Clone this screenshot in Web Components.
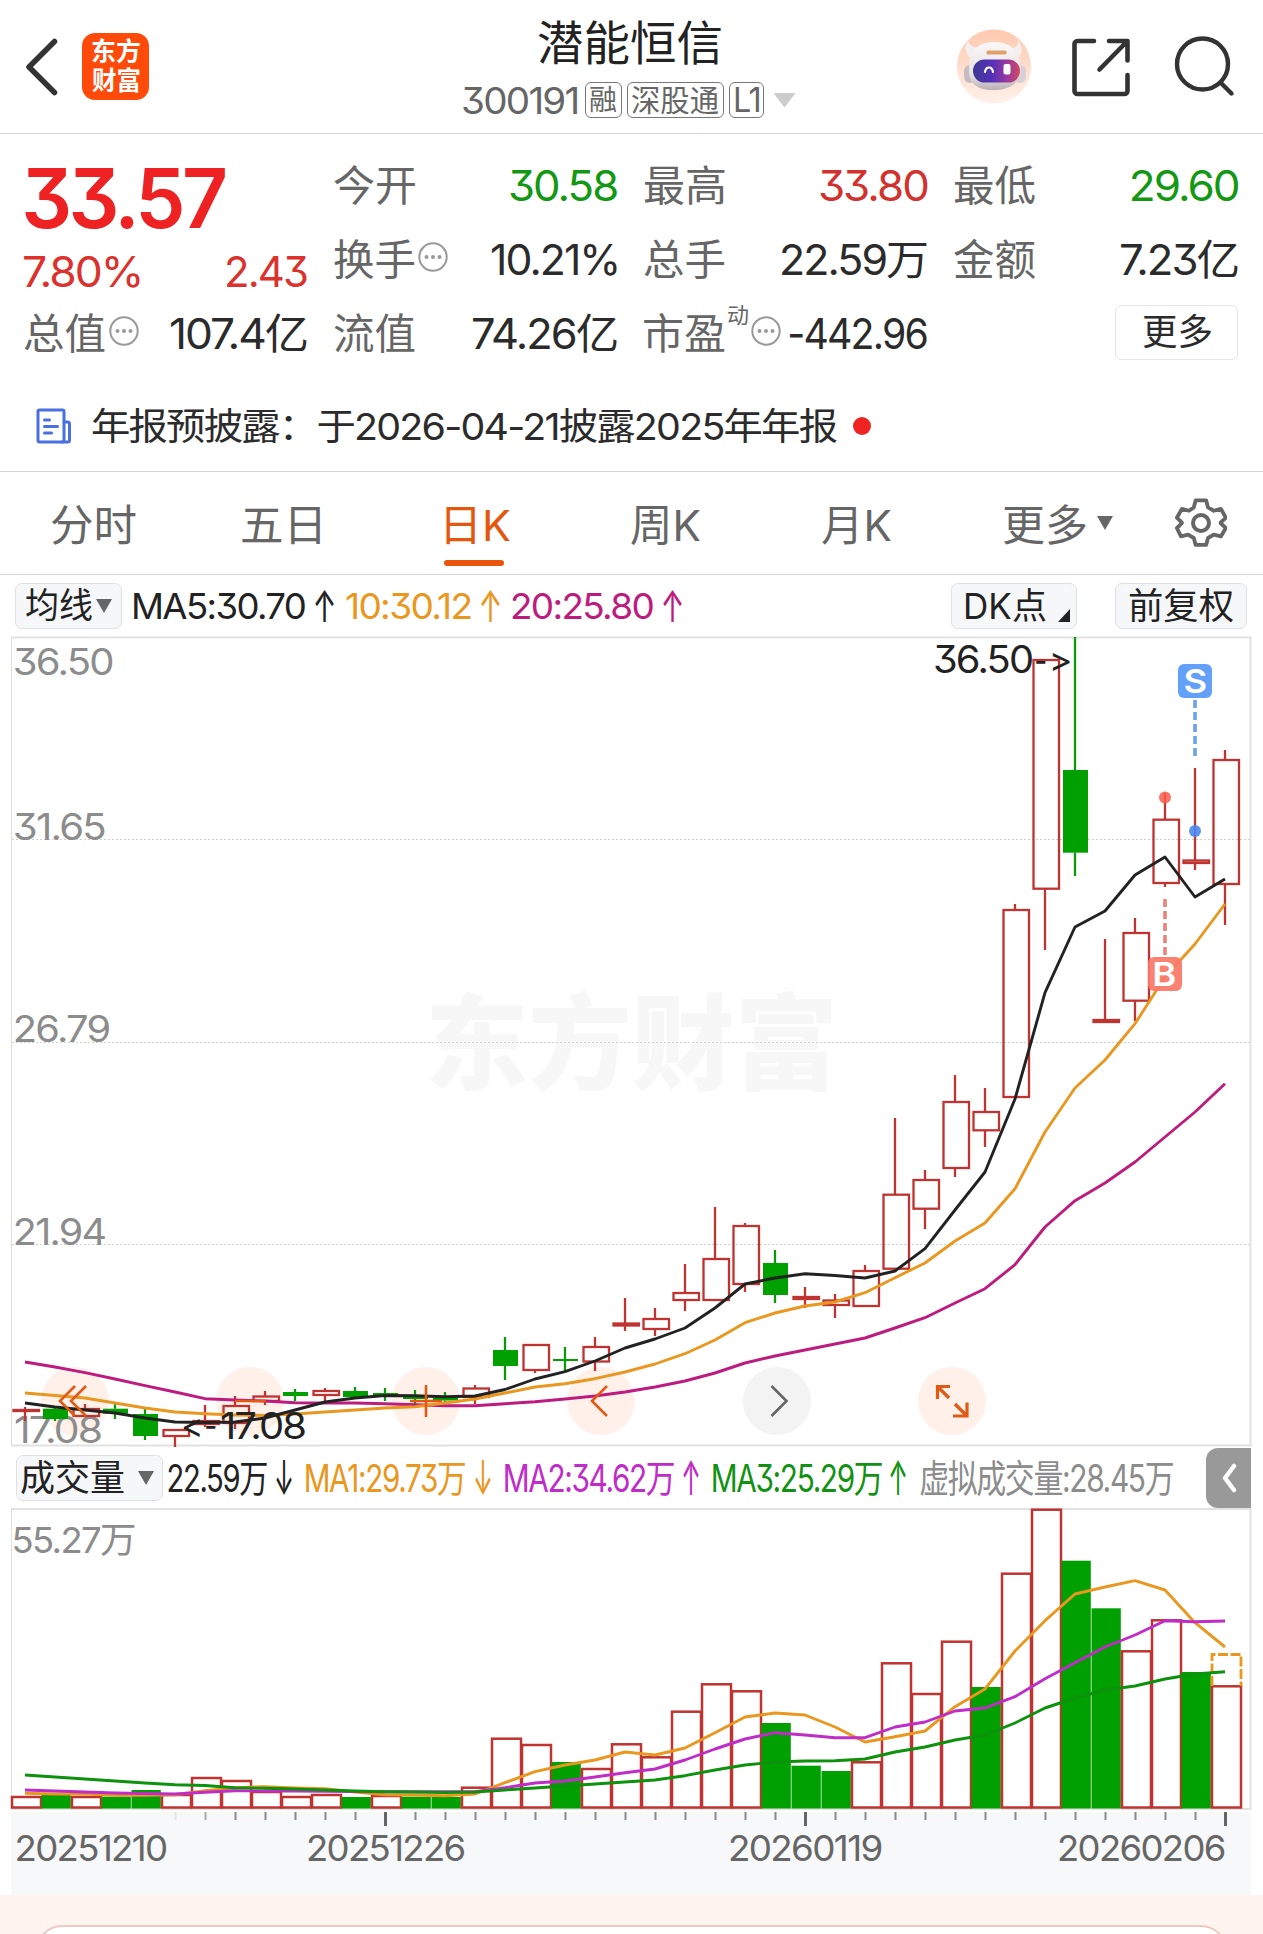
<!DOCTYPE html>
<html lang="zh-CN">
<head>
<meta charset="utf-8">
<title>潜能恒信 300191</title>
<style>
  body {
    margin: 0;
    width: 1263px;
    height: 1934px;
    overflow: hidden;
    background: #fff;
    color: #2b2b2b;
    font-family: Inter, "Noto Sans CJK SC", sans-serif;
    font-feature-settings: "cv09", "calt" 0;
  }
</style>
</head>
<body>
<stock-page></stock-page>

<script>
const FONT = 'Inter, "Noto Sans CJK SC", sans-serif'
const RED = '#bf3431'
const GREEN = '#00a000'
const ctx = document.createElement('canvas').getContext('2d')

// Numbers are set tighter than plain Chinese labels
const tracking = (text, size) => (/\d/.test(text) ? -0.045 * size : 0)

// Ink box of a string, used to condense labels into a fixed width
function measure(text, size, weight) {
  ctx.font = `${weight} ${size}px ${FONT}`
  ctx.letterSpacing = `${tracking(text, size)}px`
  const m = ctx.measureText(text)
  return { left: m.actualBoundingBoxLeft, width: m.actualBoundingBoxLeft + m.actualBoundingBoxRight }
}

function svgText(text, x, y, w, size, fill, weight = 400) {
  const m = measure(text, size, weight)
  const s = w / m.width
  const safe = text.replace('<', '&lt;').replace('>', '&gt;')
  return `<text transform="translate(${x + m.left * s} ${y}) scale(${s} 1)" font-size="${size}" font-weight="${weight}" letter-spacing="${tracking(text, size)}" fill="${fill}">${safe}</text>`
}

/** <fit-text w="107" size="42" weight="400">30.58</fit-text> */
class FitText extends HTMLElement {
  connectedCallback() {
    const text = this.textContent
    const w = +this.getAttribute('w')
    const size = +this.getAttribute('size') || 42
    const weight = this.getAttribute('weight') || 400
    const m = measure(text, size, weight)
    const s = w / m.width
    this.attachShadow({ mode: 'open' }).innerHTML = /* html */ `
      <style>
        :host { display: block; flex: none; width: ${w}px; height: ${size}px; white-space: nowrap; }
        span {
          display: inline-block;
          font-size: ${size}px;
          font-weight: ${weight};
          line-height: ${size}px;
          letter-spacing: ${tracking(text, size)}px;
          transform-origin: 0 0;
          transform: translateX(${m.left * s}px) scaleX(${s});
        }
      </style>
      <span><slot></slot></span>
    `
  }
}
customElements.define('fit-text', FitText)

const ICONS = {
  back: [34, 60, '<path d="M29.500 4.500 4 30 29.500 55.500" fill="none" stroke="#333" stroke-width="5.500" stroke-linecap="round" stroke-linejoin="round"/>'],
  share: [62, 62, '<g fill="none" stroke="#333" stroke-width="4.600" stroke-linecap="round" stroke-linejoin="round"><path d="M24 5H7.500a3 3 0 0 0-3 3v47a3 3 0 0 0 3 3h47a3 3 0 0 0 3-3V39M39 5h18.500v19.500M57 5.500 29.500 33.500"/></g>'],
  search: [64, 64, '<g fill="none" stroke="#333" stroke-width="4.400" stroke-linecap="round"><circle cx="30.500" cy="31" r="25.500"/><path d="m48.500 49.500 11 11"/></g>'],
  dots: [30, 30, '<circle cx="15" cy="15" r="13.700" fill="none" stroke="#999" stroke-width="2"/><g fill="#999"><circle cx="8.500" cy="15" r="2"/><circle cx="15" cy="15" r="2"/><circle cx="21.500" cy="15" r="2"/></g>'],
  report: [36, 38, '<g fill="none" stroke="#4a70e0" stroke-width="3" stroke-linejoin="round" stroke-linecap="round"><rect x="2" y="3" width="26" height="32" rx="1.500"/><path d="M28 15h3.500a2 2 0 0 1 2 2v16a2 2 0 0 1-2 2H26M8.500 13h5M8.500 19.500h13M8.500 26h7"/></g>'],
  gear: [52, 54, '<g fill="none" stroke="#666" stroke-width="4" stroke-linejoin="round"><path d="M20.500 4h11l2 7.500 6 3.500 7.500-2 5.300 9.300-5.600 5.200v.5l5.600 5.200-5.300 8.800-7.500-1.800-6 3.500-2 7.300h-11l-2-7.300-6-3.500-7.500 1.800L.7 33.200 6 28v-.5L.7 22.300 6 13l7.500 2 5-3.500z" transform="translate(1.200 .5) scale(.95)"/><circle cx="26" cy="27" r="8"/></g>'],
  down: [16, 14, '<path d="M0 0h16L8 14z" fill="#666"/>'],
  caret: [23, 15, '<path d="M1 0h21L11.500 14z" fill="#ccc" stroke="#ccc" stroke-linejoin="round"/>'],
  corner: [12, 13, '<path d="M12 0v13H0z" fill="#222"/>'],
  fold: [16, 32, '<path d="M13 4 4 16l9 12" fill="none" stroke="#fff" stroke-width="4.500" stroke-linecap="round" stroke-linejoin="round"/>'],
  robot: [76, 76, `
    <defs>
      <linearGradient id="bg" x2="0" y2="1"><stop stop-color="#ffc9ae"/><stop offset="1" stop-color="#fff1ea"/></linearGradient>
      <linearGradient id="hd" x2="0" y2="1"><stop stop-color="#fbf8f8"/><stop offset=".7" stop-color="#e6e1e3"/><stop offset="1" stop-color="#b8b0b4"/></linearGradient>
      <linearGradient id="fc"><stop stop-color="#3f3a92"/><stop offset=".4" stop-color="#5330b8"/><stop offset=".75" stop-color="#a03a9c"/><stop offset="1" stop-color="#d24a5e"/></linearGradient>
    </defs>
    <circle cx="37" cy="37.500" r="37" fill="url(#bg)"/>
    <path d="M13 29c-5-6-6-12-2-17 2 5 6 7 12 7zM58 26c-2-3-3-5-2-7 4-1 5-4 5-8 4 5 5 11 1 17z" fill="#f4efef"/>
    <rect x="7" y="36" width="12" height="18" rx="6" fill="#c4bcc0"/>
    <rect x="57" y="36" width="12" height="18" rx="6" fill="#d8d0d4"/>
    <path d="M37 13c17 0 26 9 27 27 0 14-11 21-28 21S12 54 12 41c0-19 8-28 25-28z" fill="url(#hd)"/>
    <rect x="29.500" y="21.500" width="20" height="4" rx="1.500" fill="#dfa06c"/>
    <rect x="16" y="30.500" width="47" height="23" rx="11.500" fill="url(#fc)"/>
    <path d="M28 43c1-6 7-6 8 0" fill="none" stroke="#fff" stroke-width="2.200" stroke-linecap="round"/>
    <rect x="46.500" y="35" width="7" height="10.500" rx="2" fill="#fff"/>`],
}

/** <ui-icon name="search"></ui-icon> */
class UiIcon extends HTMLElement {
  connectedCallback() {
    const [w, h, body] = ICONS[this.getAttribute('name')]
    this.attachShadow({ mode: 'open' }).innerHTML = /* html */ `
      <style>:host { display: block; flex: none; width: ${w}px; height: ${h}px; } svg { display: block; }</style>
      <svg width="${w}" height="${h}" viewBox="0 0 ${w} ${h}">${body}</svg>
    `
  }
}
customElements.define('ui-icon', UiIcon)

/** Small outlined button */
class ChipButton extends HTMLElement {
  connectedCallback() {
    this.attachShadow({ mode: 'open' }).innerHTML = /* html */ `
      <style>
        :host {
          display: flex;
          align-items: center;
          flex: none;
          box-sizing: border-box;
          height: 46px;
          background: #f6f7f9;
          border: 1px solid #dfe1e5;
          border-radius: 7px;
        }
      </style>
      <slot></slot>
    `
  }
}
customElements.define('chip-button', ChipButton)

class StockHeader extends HTMLElement {
  connectedCallback() {
    this.attachShadow({ mode: 'open' }).innerHTML = /* html */ `
      <style>
        :host { display: flex; height: 133px; border-bottom: 1px solid #d6d6d6; }
        .left, .right { display: flex; align-items: center; flex: none; }
        .left { padding-left: 25px; width: 425px; box-sizing: border-box; }
        .logo {
          display: flex; flex-direction: column; align-items: center; justify-content: center; gap: 3px;
          width: 67px; height: 67px; margin-left: 23px; border-radius: 13px;
          background: #ff4a0a; color: #fff;
        }
        .mid { flex: 1; display: flex; flex-direction: column; color: #222; }
        .title { margin: 19px 0 0 113px; }
        .sub { display: flex; align-items: center; margin: 9px 0 0 38px; height: 50px; color: #666; }
        .tag {
          display: flex; align-items: center; justify-content: center; flex: none;
          box-sizing: border-box; height: 36px; border: 1.500px solid #777; border-radius: 6px;
        }
        .right { width: 306px; }
      </style>
      <div class="left">
        <ui-icon name="back"></ui-icon>
        <div class="logo">
          <fit-text w="48" size="26" weight="700">东方</fit-text>
          <fit-text w="48" size="26" weight="700">财富</fit-text>
        </div>
      </div>
      <div class="mid">
        <fit-text class="title" w="183" size="47">潜能恒信</fit-text>
        <div class="sub">
          <fit-text w="114" size="37">300191</fit-text>
          <div class="tag" style="width:37px;margin-left:8px"><fit-text w="27" size="28">融</fit-text></div>
          <div class="tag" style="width:97px;margin-left:5px"><fit-text w="87" size="30">深股通</fit-text></div>
          <div class="tag" style="width:35px;margin-left:5px"><fit-text w="24" size="34">L1</fit-text></div>
          <ui-icon name="caret" style="margin-left:9px"></ui-icon>
        </div>
      </div>
      <div class="right">
        <ui-icon name="robot"></ui-icon>
        <ui-icon name="share" style="margin-left:37px"></ui-icon>
        <ui-icon name="search" style="margin-left:40px;margin-top:-3px"></ui-icon>
      </div>
    `
  }
}
customElements.define('stock-header', StockHeader)

/** Label on the left, value on the right */
class QuoteItem extends HTMLElement {
  connectedCallback() {
    this.attachShadow({ mode: 'open' }).innerHTML = /* html */ `
      <style>
        :host { display: flex; justify-content: space-between; align-items: center; }
        .label { display: flex; align-items: center; color: #666; }
      </style>
      <div class="label"><slot name="label"></slot></div>
      <slot></slot>
    `
  }
}
customElements.define('quote-item', QuoteItem)

class QuotePanel extends HTMLElement {
  connectedCallback() {
    this.attachShadow({ mode: 'open' }).innerHTML = /* html */ `
      <style>
        :host {
          display: grid;
          grid-template-columns: 283px 283px 283px 284px;
          grid-template-rows: 74px 74px 74px;
          column-gap: 27px;
          padding: 15px 0 0 24px;
        }
        .price { grid-row: 1 / 3; display: flex; flex-direction: column; color: #ee2222; margin-top: -1px; }
        .price > div { display: flex; align-items: center; justify-content: space-between; }
        .now { height: 101px; padding-left: 1px; }
        .change { height: 46px; color: #dc322e; }
        .up { color: #d2322e; }
        .down { color: #129812; }
        .more {
          display: flex; align-items: center; justify-content: center; justify-self: end; align-self: center;
          box-sizing: border-box; width: 123px; height: 55px; border: 1.500px solid #e3e5e8; border-radius: 6px;
          margin-top: -4px;
        }
      </style>
      <div class="price">
        <div class="now"><fit-text w="200" size="83" weight="600">33.57</fit-text></div>
        <div class="change"><fit-text w="116">7.80%</fit-text><fit-text w="80">2.43</fit-text></div>
      </div>
      <quote-item><fit-text slot="label" w="81">今开</fit-text><fit-text class="down" w="107">30.58</fit-text></quote-item>
      <quote-item><fit-text slot="label" w="81">最高</fit-text><fit-text class="up" w="107">33.80</fit-text></quote-item>
      <quote-item><fit-text slot="label" w="81">最低</fit-text><fit-text class="down" w="106">29.60</fit-text></quote-item>
      <quote-item>
        <fit-text slot="label" w="81">换手</fit-text>
        <ui-icon slot="label" name="dots" style="margin:-6px 0 0 3px"></ui-icon>
        <fit-text w="126">10.21%</fit-text>
      </quote-item>
      <quote-item><fit-text slot="label" w="81">总手</fit-text><fit-text w="145">22.59万</fit-text></quote-item>
      <quote-item><fit-text slot="label" w="81">金额</fit-text><fit-text w="117">7.23亿</fit-text></quote-item>
      <quote-item>
        <fit-text slot="label" w="81">总值</fit-text>
        <ui-icon slot="label" name="dots" style="margin:-6px 0 0 4px"></ui-icon>
        <fit-text w="137">107.4亿</fit-text>
      </quote-item>
      <quote-item><fit-text slot="label" w="81">流值</fit-text><fit-text w="144">74.26亿</fit-text></quote-item>
      <quote-item>
        <fit-text slot="label" w="81">市盈</fit-text>
        <fit-text slot="label" w="20" size="22" style="margin:-38px 0 0 3px">动</fit-text>
        <ui-icon slot="label" name="dots" style="margin:-6px 0 0 3px"></ui-icon>
        <fit-text w="138">-442.96</fit-text>
      </quote-item>
      <div class="more"><fit-text w="68" size="36">更多</fit-text></div>
    `
  }
}
customElements.define('quote-panel', QuotePanel)

class NoticeBar extends HTMLElement {
  connectedCallback() {
    this.attachShadow({ mode: 'open' }).innerHTML = /* html */ `
      <style>
        :host {
          display: flex; align-items: center; box-sizing: border-box;
          height: 101px; padding: 10px 0 0 36px; border-bottom: 1px solid #d6d6d6;
        }
        fit-text { margin-left: 20px; }
        i { width: 18px; height: 18px; margin-left: 16px; border-radius: 50%; background: #f02222; }
      </style>
      <ui-icon name="report"></ui-icon>
      <fit-text w="745" size="37">年报预披露：于2026-04-21披露2025年年报</fit-text>
      <i></i>
    `
  }
}
customElements.define('notice-bar', NoticeBar)

class PeriodTabs extends HTMLElement {
  connectedCallback() {
    // [label, ink width, gap before]
    const tabs = [['分时', 85, 51], ['五日', 78, 106], ['日K', 64, 126], ['周K', 69, 121], ['月K', 69, 122], ['更多', 82, 113]]
    this.attachShadow({ mode: 'open' }).innerHTML = /* html */ `
      <style>
        :host {
          display: flex; align-items: center; box-sizing: border-box;
          height: 103px; border-bottom: 1px solid #d6d6d6; color: #666;
        }
        .tab { display: flex; flex-direction: column; justify-content: center; height: 102px; padding-top: 5px; box-sizing: border-box; }
        .on { color: #e4580e; padding-top: 24px; }
        .on i { width: 60px; height: 6px; margin: 13px 0 0 -2px; border-radius: 3px; background: #e8560c; }
      </style>
      ${tabs.map(([t, w, gap]) => `
        <div class="tab${t === '日K' ? ' on' : ''}" style="margin-left:${gap}px">
          <fit-text w="${w}" size="43">${t}</fit-text>${t === '日K' ? '<i></i>' : ''}
        </div>`).join('')}
      <ui-icon name="down" style="margin:0 0 0 11px"></ui-icon>
      <ui-icon name="gear" style="margin-left:62px"></ui-icon>
    `
  }
}
customElements.define('period-tabs', PeriodTabs)

class MaBar extends HTMLElement {
  connectedCallback() {
    this.attachShadow({ mode: 'open' }).innerHTML = /* html */ `
      <style>
        :host { display: flex; align-items: center; height: 61px; padding-left: 15px; color: #222; }
        .o { color: #e9971f; }
        .m { color: #bd1c7e; }
      </style>
      <chip-button style="width:107px;padding-left:10px">
        <fit-text w="66" size="35">均线</fit-text>
        <ui-icon name="down" style="margin-left:4px"></ui-icon>
      </chip-button>
      <fit-text style="margin-left:12px" w="171" size="36">MA5:30.70</fit-text>
      <fit-text style="margin-left:10px" w="19" size="44">↑</fit-text>
      <fit-text class="o" style="margin-left:12px" w="125" size="36">10:30.12</fit-text>
      <fit-text class="o" style="margin-left:10px" w="19" size="44">↑</fit-text>
      <fit-text class="m" style="margin-left:12px" w="141" size="36">20:25.80</fit-text>
      <fit-text class="m" style="margin-left:10px" w="19" size="44">↑</fit-text>
      <chip-button style="width:126px;margin-left:269px;padding-left:14px">
        <fit-text w="80" size="36">DK点</fit-text>
        <ui-icon name="corner" style="margin:20px 0 0 12px"></ui-icon>
      </chip-button>
      <chip-button style="width:132px;margin-left:38px;padding-left:13px">
        <fit-text w="104" size="36">前复权</fit-text>
      </chip-button>
    `
  }
}
customElements.define('ma-bar', MaBar)

const STEP = 30
const cx = (i) => 25 + i * STEP
const line = (ys, color) =>
  `<polyline points="${ys.map((y, i) => `${cx(i)},${y}`).join(' ')}" fill="none" stroke="${color}" stroke-width="2.900" stroke-linejoin="round"/>`

// [up, high, body top, body bottom, low] in chart pixels
const CANDLES = [
  [1, 1407, 1410, 1411, 1421], [0, 1406, 1408.7, 1419, 1421], [1, 1404, 1409, 1416, 1417], [0, 1404, 1408.7, 1413.7, 1419],
  [0, 1409, 1414, 1436, 1440], [1, 1430, 1430, 1436, 1447], [1, 1405, 1421, 1424, 1427], [1, 1396, 1406, 1423, 1429],
  [1, 1391, 1396.5, 1401, 1405], [0, 1389, 1392, 1396, 1401], [1, 1388, 1391, 1395, 1401], [0, 1387, 1391, 1397, 1397],
  [0, 1388, 1393, 1395, 1401], [0, 1390, 1396, 1399, 1404], [0, 1392, 1398, 1400.5, 1402], [1, 1385, 1388.5, 1397, 1404],
  [0, 1337, 1350, 1366, 1380], [1, 1345, 1345, 1370, 1373], [0, 1347, 1359, 1361, 1372], [1, 1337, 1347, 1361.5, 1371],
  [1, 1298, 1323.5, 1325.5, 1331], [1, 1308, 1319, 1329, 1336], [1, 1264, 1293, 1300, 1311], [1, 1207, 1259, 1300, 1300],
  [1, 1223, 1226, 1284, 1292], [0, 1250, 1263, 1295, 1303], [1, 1287, 1297, 1299, 1308], [1, 1294, 1300.5, 1305, 1318],
  [1, 1265, 1271, 1306, 1307], [1, 1118, 1194.7, 1268.7, 1269], [1, 1170, 1180, 1208.7, 1229], [1, 1075, 1102, 1168, 1177],
  [1, 1088, 1112, 1130.3, 1147], [1, 904, 910, 1097, 1097], [1, 660, 660, 888.7, 950], [0, 637, 770, 852.7, 876],
  [1, 939, 1020, 1022, 1023], [1, 918, 933, 1000.7, 1021], [1, 793, 819.7, 883, 887], [1, 768, 860.5, 863, 870],
  [1, 750, 760, 884, 925],
]
const MA5 = [1403, 1407, 1410, 1413, 1418, 1422, 1422.5, 1422, 1418, 1410, 1402, 1398, 1395.5, 1395.7, 1396.7, 1396, 1389.5, 1379, 1371.7, 1361, 1348, 1339, 1328, 1308, 1284, 1278, 1273.7, 1275.5, 1278, 1271, 1248.7, 1210, 1172, 1099, 992.7, 927, 911, 875, 857, 897, 879]
const MA10 = [1393, 1395.5, 1398, 1403, 1408, 1412, 1413.7, 1415, 1415.5, 1414, 1412, 1410, 1408, 1406.7, 1403, 1399, 1393, 1387, 1383.7, 1378.7, 1372, 1364, 1353.7, 1340, 1322.7, 1313, 1306, 1302, 1292.7, 1277.7, 1263, 1241, 1223, 1188.7, 1132, 1088, 1060, 1023.7, 977, 944, 904]
const MA20 = [1362, 1367, 1372.7, 1379, 1385.7, 1392, 1398.7, 1400, 1401, 1402.7, 1403, 1403, 1403.7, 1404.7, 1405.7, 1405.7, 1403.7, 1401.7, 1399, 1396, 1392, 1387, 1381, 1373, 1363, 1356, 1350, 1344, 1338, 1328, 1317.7, 1303, 1288.7, 1264.7, 1227, 1200.7, 1183, 1162, 1137, 1112, 1083.7]

function candle([up, high, top, bottom, low], i) {
  const x = cx(i)
  const color = up ? RED : '#0b980b'
  const wicks = `<path d="M${x} ${high}V${top}M${x} ${bottom}V${low}" stroke="${color}" stroke-width="2.300"/>`
  const body = up
    ? `<rect x="${x - 11.5}" y="${top}" width="25.500" height="${bottom - top}" fill="none" stroke="${RED}" stroke-width="2.300"/>`
    : `<rect x="${x - 12}" y="${top}" width="25" height="${bottom - top}" fill="${GREEN}"/>`
  return wicks + body
}

class KlineChart extends HTMLElement {
  connectedCallback() {
    const labels = [['36.50', 675, 98], ['31.65', 839.5, 90], ['26.79', 1042, 94], ['21.94', 1245, 90], ['17.08', 1443, 86]]
    const circles = [75, 250, 426, 601, 777, 952]
    this.attachShadow({ mode: 'open' }).innerHTML = /* html */ `
      <style>:host { display: block; height: 811px; } svg { display: block; overflow: visible; }</style>
      <svg width="1263" height="811" viewBox="0 636 1263 811">
        ${svgText('东方财富', 430, 1082, 402, 104, '#f7f7f7', 900)}
        <g stroke="#d0d0d0" stroke-dasharray="2 2"><path d="M12 839.500H1250M12 1042.500H1250M12 1244.500H1250"/></g>
        <path d="M11.500 637V1446" stroke="#dedede"/>
        <path d="M11 637.500H1250.500V1445.500H11" fill="none" stroke="#e2e2e2" stroke-width="2"/>
        ${circles.map((x) => `<circle cx="${x}" cy="1401" r="34" fill="${x === 777 ? '#f3f3f3' : '#fff1ea'}"/>`).join('')}
        ${labels.map(([t, y, w]) => svgText(t, 15, y, w, 37, '#8c8c8c')).join('')}
        ${CANDLES.map(candle).join('')}
        ${line(MA20, '#bd1c7e')}${line(MA10, '#e9971f')}${line(MA5, '#222')}
        <g fill="none" stroke="#e05a14" stroke-width="2.600">
          <path d="M75 1386 60 1401 75 1416M86 1386 71 1401 86 1416"/>
          <path d="M235 1401H266M410 1401H442M426 1385V1417"/>
          <path d="M607 1386 592 1401 607 1416"/>
          <path d="M771.500 1386 786.500 1401 771.500 1416" stroke="#666"/>
          <path d="M950 1386.500H937.500V1399M938 1387 949 1398M953 1416H967V1402.500M966.500 1415.500 955 1404" stroke-width="3.200"/>
        </g>
        ${svgText('<', 183, 1438, 17, 34, '#222')}
        ${svgText('-', 206, 1438, 10, 34, '#222')}
        ${svgText('17.08', 221, 1439, 84, 37, '#222')}
        ${svgText('36.50', 935, 673, 97, 38, '#222')}
        ${svgText('-', 1036, 673, 10, 34, '#222')}
        ${svgText('>', 1052, 672, 18, 34, '#222')}
        <g stroke-width="3.600" stroke-dasharray="8 4">
          <path d="M1195 700V757" stroke="#6ba2ee"/>
          <path d="M1165 899V957" stroke="#ee8175"/>
        </g>
        <circle cx="1165" cy="797.500" r="6" fill="#fa5c48" opacity=".85"/>
        <circle cx="1195" cy="831" r="6" fill="#4a86f0" opacity=".9"/>
        <rect x="1178" y="664" width="34" height="34" rx="6" fill="#62a0fa"/>
        <rect x="1148" y="957" width="34" height="34" rx="6" fill="#fa7968" opacity=".93"/>
        ${svgText('S', 1184.5, 693, 21, 33, '#fff', 600)}
        ${svgText('B', 1154.5, 986, 21, 33, '#fff', 600)}
      </svg>
    `
  }
}
customElements.define('kline-chart', KlineChart)

class VolumeBar extends HTMLElement {
  connectedCallback() {
    this.attachShadow({ mode: 'open' }).innerHTML = /* html */ `
      <style>
        :host { display: flex; align-items: center; height: 61px; padding-left: 16px; color: #222; }
        .o { color: #e9971f; }
        .m { color: #c02cc8; }
        .g { color: #129212; }
        .fold {
          display: flex; align-items: center; justify-content: center;
          width: 45px; height: 60px; margin-left: 33px; border-radius: 12px 0 0 12px; background: #999;
        }
      </style>
      <chip-button style="width:147px;padding-left:4px">
        <fit-text w="103" size="36">成交量</fit-text>
        <ui-icon name="down" style="margin-left:14px"></ui-icon>
      </chip-button>
      <fit-text style="margin-left:5px" w="99" size="38">22.59万</fit-text>
      <fit-text style="margin-left:9px" w="16" size="48">↓</fit-text>
      <fit-text class="o" style="margin-left:14px" w="159" size="38">MA1:29.73万</fit-text>
      <fit-text class="o" style="margin-left:10px" w="16" size="48">↓</fit-text>
      <fit-text class="m" style="margin-left:14px" w="169" size="38">MA2:34.62万</fit-text>
      <fit-text class="m" style="margin-left:9px" w="16" size="48">↑</fit-text>
      <fit-text class="g" style="margin-left:14px" w="169" size="38">MA3:25.29万</fit-text>
      <fit-text class="g" style="margin-left:8px" w="16" size="48">↑</fit-text>
      <fit-text style="margin-left:14px;color:#8c8c8c" w="253" size="38">虚拟成交量:28.45万</fit-text>
      <div class="fold"><ui-icon name="fold"></ui-icon></div>
    `
  }
}
customElements.define('volume-bar', VolumeBar)

// [up, top of the bar]
const VOLUMES = [
  [1, 1797], [0, 1795], [1, 1797], [0, 1796.7], [0, 1790], [1, 1795], [1, 1778], [1, 1781], [1, 1792], [1, 1797],
  [1, 1795], [0, 1797], [1, 1796], [0, 1796.7], [0, 1797], [1, 1787.7], [1, 1738.7], [1, 1745], [0, 1762], [1, 1769],
  [1, 1744.3], [1, 1757.3], [1, 1711.7], [1, 1684.3], [1, 1691.3], [0, 1723], [0, 1765.7], [0, 1771], [1, 1762.3], [1, 1663.3],
  [1, 1694], [1, 1641.7], [0, 1687], [1, 1573.7], [1, 1509.7], [0, 1560.7], [0, 1608.3], [1, 1651.3], [1, 1620.3], [0, 1672],
  [1, 1686.3],
]
const VMA1 = [1793.3, 1794, 1794, 1795.3, 1795.3, 1794.7, 1790.7, 1787.7, 1786.7, 1788, 1788.7, 1792, 1794.7, 1795, 1795.7, 1794, 1782.7, 1771.7, 1765, 1760, 1752, 1755, 1748, 1732.7, 1717, 1713, 1715, 1727, 1742, 1736.7, 1731, 1706.7, 1689, 1651, 1620.7, 1594, 1587, 1580.7, 1590, 1622.7, 1647]
const VMA2 = [1790, 1791, 1792, 1793, 1793.5, 1794, 1792.3, 1790.7, 1791, 1791, 1791.3, 1791.5, 1791.7, 1791.7, 1791.7, 1791.7, 1787.7, 1783, 1781, 1777, 1772.7, 1769, 1760, 1749, 1739, 1732.7, 1735, 1737.7, 1737.7, 1727, 1722, 1711, 1708, 1696.7, 1678.7, 1662.7, 1647, 1635, 1620.7, 1621.7, 1621]
const VMA3 = [1775, 1777, 1779, 1781, 1783, 1784.7, 1785.5, 1787.7, 1788.3, 1789, 1790, 1791, 1791.7, 1792, 1792.5, 1792, 1790, 1788, 1786, 1784, 1782, 1780, 1775.7, 1770, 1765, 1762, 1761, 1760.7, 1759, 1752, 1747, 1740, 1735, 1723, 1708, 1698, 1690, 1686, 1679, 1674, 1671.7]

class VolumeChart extends HTMLElement {
  connectedCallback() {
    const bars = VOLUMES.map(([up, top], i) => {
      const x = 11.5 + i * STEP
      return up
        ? `<rect x="${x + 0.5}" y="${top}" width="29" height="${1807.5 - top}" fill="#fff" stroke="${RED}" stroke-width="2.500"/>`
        : `<rect x="${x}" y="${top}" width="29.300" height="${1808.5 - top}" fill="${GREEN}"/>`
    }).join('')
    let ticks = ''
    for (let i = 5; i <= 40; i++) {
      const major = i === 12 || i === 26 || i === 40
      const color = i === 5 ? '#e4e4e6' : i === 6 ? '#aaa' : major ? '#666' : '#8a8a8a'
      ticks += `<path d="M${cx(i) + 0.5} 1812v${major ? 14 : 8}" stroke="${color}" stroke-width="${major ? 3 : 2}"/>`
    }
    const dates = [['20251210', 16.5, 150], ['20251226', 308, 157], ['20260119', 730, 152], ['20260206', 1059, 166]]
    this.attachShadow({ mode: 'open' }).innerHTML = /* html */ `
      <style>:host { display: block; height: 387px; } svg { display: block; }</style>
      <svg width="1263" height="387" viewBox="0 1508 1263 387">
        <path d="M11.500 1509V1808" stroke="#dedede"/>
        <path d="M11 1509H1250.500V1809H11" fill="none" stroke="#e2e2e2" stroke-width="2"/>
        <rect x="11" y="1812" width="1240" height="83" fill="#f7f8fa"/>
        ${bars}
        <path d="M1212 1686V1654.500H1241V1686" fill="none" stroke="#e9971f" stroke-width="2.800" stroke-dasharray="10 2.500"/>
        ${line(VMA1, '#e9971f')}${line(VMA2, '#c02cc8')}${line(VMA3, '#0c920c')}
        ${svgText('55.27万', 13.5, 1552.5, 121, 36, '#8c8c8c')}
        ${ticks}
        ${dates.map(([t, x, w]) => svgText(t, x, 1861, w, 36, '#666')).join('')}
      </svg>
    `
  }
}
customElements.define('volume-chart', VolumeChart)

class PromoCard extends HTMLElement {
  connectedCallback() {
    this.attachShadow({ mode: 'open' }).innerHTML = /* html */ `
      <style>
        :host { display: block; box-sizing: border-box; height: 39px; padding: 30px 36px 0; background: #fff4ef; overflow: hidden; }
        div { height: 80px; border: 2px solid #edc9c1; border-radius: 26px; background: #fff; }
      </style>
      <div></div>
    `
  }
}
customElements.define('promo-card', PromoCard)

class StockPage extends HTMLElement {
  connectedCallback() {
    this.attachShadow({ mode: 'open' }).innerHTML = /* html */ `
      <style>:host { display: flex; flex-direction: column; width: 1263px; }</style>
      <stock-header></stock-header>
      <quote-panel></quote-panel>
      <notice-bar></notice-bar>
      <period-tabs></period-tabs>
      <ma-bar></ma-bar>
      <kline-chart></kline-chart>
      <volume-bar></volume-bar>
      <volume-chart></volume-chart>
      <promo-card></promo-card>
    `
  }
}
customElements.define('stock-page', StockPage)
</script>
</body>
</html>
